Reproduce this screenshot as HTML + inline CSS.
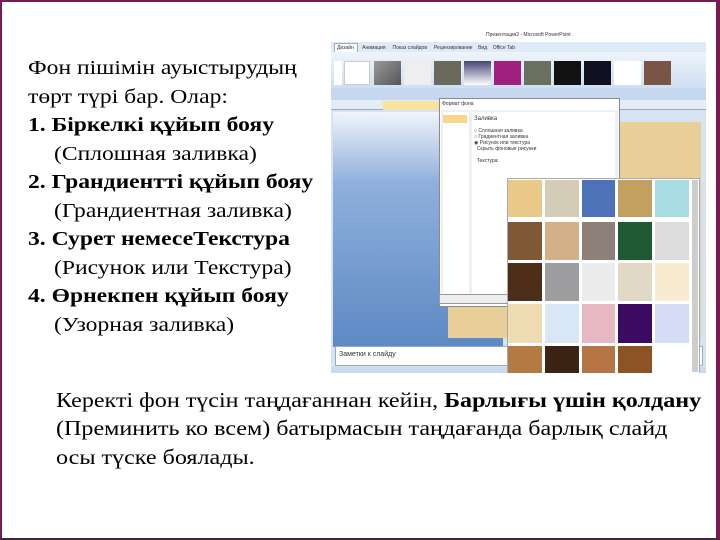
<!DOCTYPE html>
<html><head><meta charset="utf-8"><style>
*{margin:0;padding:0;box-sizing:border-box}
body{width:720px;height:540px;overflow:hidden;background:#fff;position:relative;font-family:"Liberation Serif",serif;color:#000}
.frame{position:absolute;left:0;top:0;width:720px;height:540px;border-left:2px solid #7a1a50;border-top:2px solid #7a1a50;border-right:4px solid #7a1a50;border-bottom:2px solid #3a2a3a}
.t{position:absolute;font-size:20px;line-height:28.5px;white-space:nowrap;transform:scaleX(1.18);transform-origin:0 0}
.a{position:absolute;}
.bt{position:absolute;left:56px;font-size:21.5px;white-space:nowrap;line-height:28px;transform:scaleX(1.12);transform-origin:0 0}
.sm{font-family:"Liberation Sans",sans-serif;font-size:5px;color:#333;position:absolute;white-space:nowrap}
</style></head><body>
<div class="frame"></div>
<div class="t" style="left:28px;top:54px">Фон пішімін ауыстырудың<br>төрт түрі бар. Олар:</div>
<div class="t" style="left:28px;top:111px"><b>1. Біркелкі құйып бояу</b></div>
<div class="t" style="left:54px;top:140px">(Сплошная заливка)</div>
<div class="t" style="left:28px;top:168px"><b>2. Грандиентті құйып бояу</b></div>
<div class="t" style="left:54px;top:197px">(Грандиентная заливка)</div>
<div class="t" style="left:28px;top:225px"><b>3. Сурет немесеТекстура</b></div>
<div class="t" style="left:54px;top:254px">(Рисунок или Текстура)</div>
<div class="t" style="left:28px;top:282px"><b>4. Өрнекпен құйып бояу</b></div>
<div class="t" style="left:54px;top:311px">(Узорная заливка)</div>

<!-- screenshot -->
<div class="a" style="left:331px;top:28px;width:375px;height:345px;background:#d6e3f3;overflow:hidden">
  <div class="a" style="left:0;top:0;width:375px;height:14px;background:#fff"></div>
  <div class="sm" style="left:155px;top:4px">Презентация2 - Microsoft PowerPoint</div>
  <div class="a" style="left:0;top:14px;width:375px;height:10px;background:#dfeaf7"></div>
  <div class="a" style="left:3px;top:15px;width:24px;height:10px;background:#fff;border:1px solid #9ab"></div>
  <div class="sm" style="left:6px;top:17px">Дизайн&nbsp;&nbsp;&nbsp;&nbsp;&nbsp;&nbsp;Анимация&nbsp;&nbsp;&nbsp;&nbsp;&nbsp;Показ слайдов&nbsp;&nbsp;&nbsp;&nbsp;&nbsp;Рецензирование&nbsp;&nbsp;&nbsp;&nbsp;Вид&nbsp;&nbsp;&nbsp;&nbsp;Office Tab</div>
  <div class="a" style="left:0;top:24px;width:375px;height:36px;background:linear-gradient(#eef4fb,#cfdff2)"></div>
  <div class="a" style="left:3px;top:33px;width:8px;height:24px;background:#fff"></div>
  <div class="a" style="left:13px;top:33px;width:26px;height:24px;background:#fff;border:1px solid #ccc"></div>
  <div class="a" style="left:43px;top:33px;width:27px;height:24px;background:linear-gradient(135deg,#999,#555)"></div>
  <div class="a" style="left:73px;top:33px;width:27px;height:24px;background:#eee"></div>
  <div class="a" style="left:103px;top:33px;width:27px;height:24px;background:#6a6a5a"></div>
  <div class="a" style="left:133px;top:33px;width:27px;height:24px;background:linear-gradient(#447,#fff)"></div>
  <div class="a" style="left:163px;top:33px;width:27px;height:24px;background:#a02080"></div>
  <div class="a" style="left:193px;top:33px;width:27px;height:24px;background:#6a7060"></div>
  <div class="a" style="left:223px;top:33px;width:27px;height:24px;background:#111"></div>
  <div class="a" style="left:253px;top:33px;width:27px;height:24px;background:#101020"></div>
  <div class="a" style="left:283px;top:33px;width:27px;height:24px;background:#fff"></div>
  <div class="a" style="left:313px;top:33px;width:27px;height:24px;background:#7a5545"></div>
  <div class="a" style="left:0;top:60px;width:375px;height:12px;background:#c5d8ef"></div>
  <div class="a" style="left:0;top:72px;width:375px;height:10px;background:#e4ecf6;border-bottom:1px solid #9ab"></div>
  <div class="a" style="left:52px;top:73px;width:60px;height:9px;background:#fbe2a0"></div>
  <div class="a" style="left:2px;top:84px;width:170px;height:235px;background:linear-gradient(#f0f4fa 0%,#8fb0dc 30%,#5e89c4 100%)"></div>
  <div class="a" style="left:117px;top:94px;width:253px;height:216px;background:#e8cf98"></div>
  <div class="a" style="left:4px;top:318px;width:368px;height:20px;background:#fff;border:1px solid #9ab"></div>
  <div class="sm" style="left:8px;top:323px;font-size:7px">Заметки к слайду</div>
  <div class="a" style="left:0;top:339px;width:375px;height:6px;background:#c9d9ee"></div>
  <!-- dialog -->
  <div class="a" style="left:108px;top:70px;width:181px;height:209px;background:#fff;border:1px solid #889"></div>
  <div class="sm" style="left:111px;top:73px">Формат фона</div>
  <div class="a" style="left:110px;top:82px;width:177px;height:194px;background:#eef0f4"></div>
  <div class="a" style="left:112px;top:84px;width:26px;height:182px;background:#fff"></div>
  <div class="a" style="left:112px;top:87px;width:24px;height:8px;background:#fbd58a"></div>
  <div class="a" style="left:141px;top:84px;width:143px;height:182px;background:#fff"></div>
  <div class="sm" style="left:143px;top:88px;font-size:6px">Заливка</div>
  <div class="sm" style="left:143px;top:100px">○ Сплошная заливка<br>○ Градиентная заливка<br>◉ Рисунок или текстура<br>&nbsp;&nbsp;Скрыть фоновые рисунки<br><br>&nbsp;&nbsp;Текстура:</div>
  <div class="a" style="left:108px;top:266px;width:70px;height:10px;background:#eee;border:1px solid #999"></div>
  <!-- gallery -->
  <div class="a" style="left:176px;top:150px;width:193px;height:196px;background:#fff;border:1px solid #aaa"></div>
  <div class="a" style="left:361px;top:152px;width:6px;height:192px;background:#cdcdcd"></div>
  <div class="a" style="left:177px;top:152px;width:34px;height:37px;background:#e8c98a"></div>
  <div class="a" style="left:214px;top:152px;width:34px;height:37px;background:#d5ccb8"></div>
  <div class="a" style="left:251px;top:152px;width:33px;height:37px;background:#4e72b8"></div>
  <div class="a" style="left:287px;top:152px;width:34px;height:37px;background:#c2a060"></div>
  <div class="a" style="left:324px;top:152px;width:34px;height:37px;background:#a8dde6"></div>
  <div class="a" style="left:177px;top:194px;width:34px;height:38px;background:#7f5836"></div>
  <div class="a" style="left:214px;top:194px;width:34px;height:38px;background:#d4b088"></div>
  <div class="a" style="left:251px;top:194px;width:33px;height:38px;background:#8d8078"></div>
  <div class="a" style="left:287px;top:194px;width:34px;height:38px;background:#1f5a35"></div>
  <div class="a" style="left:324px;top:194px;width:34px;height:38px;background:#dcdcdc"></div>
  <div class="a" style="left:177px;top:235px;width:34px;height:38px;background:#4d2e18"></div>
  <div class="a" style="left:214px;top:235px;width:34px;height:38px;background:#9e9ea0"></div>
  <div class="a" style="left:251px;top:235px;width:33px;height:38px;background:#ececec"></div>
  <div class="a" style="left:287px;top:235px;width:34px;height:38px;background:#e2d8c6"></div>
  <div class="a" style="left:324px;top:235px;width:34px;height:38px;background:#f8ebcf"></div>
  <div class="a" style="left:177px;top:276px;width:34px;height:39px;background:#f0dcb2"></div>
  <div class="a" style="left:214px;top:276px;width:34px;height:39px;background:#d8e6f6"></div>
  <div class="a" style="left:251px;top:276px;width:33px;height:39px;background:#e8b8c2"></div>
  <div class="a" style="left:287px;top:276px;width:34px;height:39px;background:#3c0c62"></div>
  <div class="a" style="left:324px;top:276px;width:34px;height:39px;background:#d4dcf6"></div>
  <div class="a" style="left:177px;top:318px;width:34px;height:27px;background:#b37a44"></div>
  <div class="a" style="left:214px;top:318px;width:34px;height:27px;background:#3c2414"></div>
  <div class="a" style="left:251px;top:318px;width:33px;height:27px;background:#b57544"></div>
  <div class="a" style="left:287px;top:318px;width:34px;height:27px;background:#8c5424"></div>
</div>

<div class="bt" style="top:386px">Керекті фон түсін таңдағаннан кейін, <b>Барлығы үшін қолдану</b></div>
<div class="bt" style="top:414px">(Преминить ко всем) батырмасын таңдағанда барлық слайд</div>
<div class="bt" style="top:443px">осы түске боялады.</div>
</body></html>
